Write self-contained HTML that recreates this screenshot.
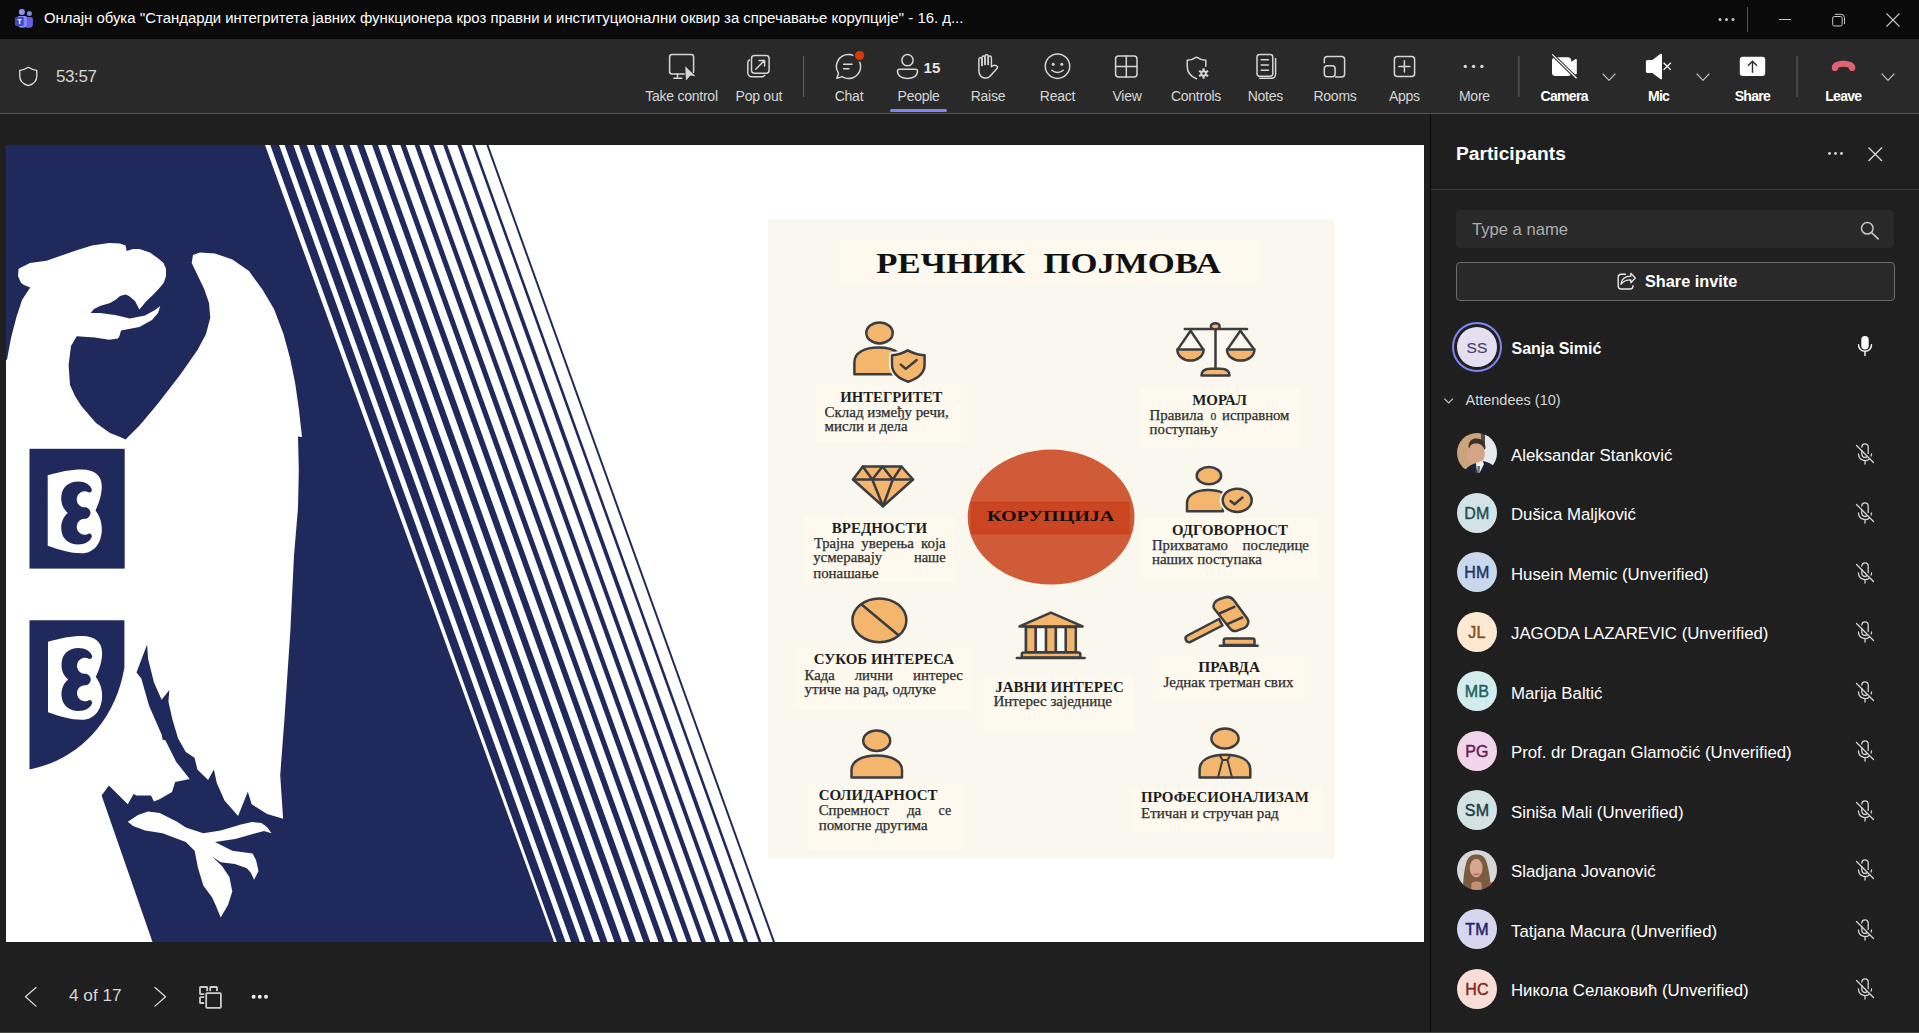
<!DOCTYPE html>
<html><head><meta charset="utf-8">
<style>
*{margin:0;padding:0;box-sizing:border-box}
html,body{width:1919px;height:1033px;overflow:hidden;background:#1f1f1f;font-family:"Liberation Sans",sans-serif;position:relative}
.abs{position:absolute}
#titlebar{left:0;top:0;width:1919px;height:39px;background:#0a0a0a}
#title{left:44px;top:9px;font-size:14.9px;color:#fff;white-space:nowrap;line-height:18px}
#toolbar{left:0;top:39px;width:1919px;height:74px;background:#292929}
#tbline{left:0;top:113px;width:1919px;height:1px;background:#545454}
.lbl{position:absolute;top:88px;font-size:14px;letter-spacing:-0.25px;line-height:16px;color:#d6d6d6;white-space:nowrap;transform:translateX(-50%)}
.lbl.w{color:#fff;font-weight:bold;letter-spacing:-0.7px}
.sep{position:absolute;width:1px;background:#555}
svg.ic{position:absolute;overflow:visible}
#panel{left:1430px;top:114px;width:489px;height:918px;background:#1f1f1f;border-left:1px solid #060606}
.pname{position:absolute;left:1511px;font-size:16.8px;color:#fff;white-space:nowrap;line-height:20px}
.av{position:absolute;left:1457px;width:40px;height:40px;border-radius:50%;font-size:16px;font-weight:normal;-webkit-text-stroke:0.45px currentColor;text-align:center;line-height:41px;letter-spacing:0.2px}
</style></head><body>
<!-- TITLE BAR -->
<div id="titlebar" class="abs"></div>
<svg class="ic" style="left:0;top:0" width="40" height="38" viewBox="0 0 40 38">
  <circle cx="21.9" cy="11.9" r="3" fill="#8f93f2"/>
  <circle cx="29.4" cy="13.4" r="2.5" fill="#7e84f0"/>
  <path d="M26 16.9 h4.9 a2 2 0 0 1 2 2 v5.4 a3.5 3.5 0 0 1 -3.5 3.5 h-3.4z" fill="#6b5de2"/>
  <path d="M17.9 16.1 h7.5 a1.5 1.5 0 0 1 1.5 1.5 v6.5 a3.7 3.7 0 0 1 -3.7 3.7 h-1.6 a3.7 3.7 0 0 1 -3.7 -3.7z" fill="#7e8cf4"/>
  <rect x="15" y="16.9" width="8.8" height="9" rx="1.3" fill="#4349c9"/>
  <path d="M17.8 19.7 h3.6 M19.6 19.7 v4.4" stroke="#fff" stroke-width="1.3"/>
</svg>
<div id="title" class="abs">Онлајн обука ''Стандарди интегритета јавних функционера кроз правни и институционални оквир за спречавање корупције'' - 16. д...</div>
<svg class="ic" style="left:1700px;top:0" width="219" height="38" viewBox="0 0 219 38">
  <g fill="#c8c8c8"><circle cx="20" cy="19.4" r="1.5"/><circle cx="26.5" cy="19.4" r="1.5"/><circle cx="33" cy="19.4" r="1.5"/></g>
  <rect x="47" y="7" width="1" height="25" fill="#555"/>
  <path d="M79 19.5 h12" stroke="#c8c8c8" stroke-width="1"/>
  <rect x="132.7" y="16.5" width="9.5" height="9.5" rx="1.6" fill="none" stroke="#c8c8c8" stroke-width="1"/>
  <path d="M134.8 14.3 h6.2 a3.5 3.5 0 0 1 3.5 3.5 v6.3" fill="none" stroke="#c8c8c8" stroke-width="1"/>
  <path d="M186.5 13.5 L199.5 26.5 M199.5 13.5 L186.5 26.5" stroke="#c8c8c8" stroke-width="1.1"/>
</svg>

<!-- TOOLBAR -->
<div id="toolbar" class="abs"></div>
<div id="tbline" class="abs"></div>
<svg class="ic" style="left:0;top:38px" width="120" height="75" viewBox="0 38 120 75">
  <path d="M28.3 67.3 C31 69.1 34 70.1 36.8 70.3 V76 C36.8 81 33.5 84.2 28.3 85.6 C23.1 84.2 19.8 81 19.8 76 V70.3 C22.6 70.1 25.6 69.1 28.3 67.3 Z" fill="none" stroke="#e0e0e0" stroke-width="1.3" stroke-linejoin="round"/>
</svg>
<div class="abs" style="left:56px;top:67px;font-size:17px;letter-spacing:-0.4px;line-height:20px;color:#d6d6d6">53:57</div>

<svg class="ic" style="left:0;top:0" width="1919" height="113" viewBox="0 0 1919 113">
 <g fill="none" stroke="#d6d6d6" stroke-width="1.5" stroke-linecap="round" stroke-linejoin="round">
  <!-- take control -->
  <rect x="669.6" y="54.6" width="24" height="19.3" rx="2.5"/>
  <path d="M677.5 74 v4 M673.8 78.2 h8"/>
  <!-- pop out -->
  <rect x="751.5" y="55.6" width="17.6" height="17.6" rx="3"/>
  <path d="M749.3 60 c-1 0.6 -1.5 1.6 -1.5 2.8 v10 a4 4 0 0 0 4 4 h10 c1.2 0 2.2 -0.5 2.8 -1.5"/>
  <path d="M755.8 69.2 L764.4 60.6 M759 60.4 h5.6 v5.6"/>
  <!-- chat -->
  <path d="M848.5 54.5 a12 12 0 1 1 -6.4 22.1 l-5.2 1.6 l1.6 -5 a12 12 0 0 1 10 -18.7z"/>
  <path d="M843.7 64.3 h8.4 M843.7 68.8 h5.2"/>
  <!-- people -->
  <circle cx="907.5" cy="60.2" r="5.6"/>
  <path d="M899.5 69.3 h16 a2 2 0 0 1 2 2 c0 4.5 -4.5 7.2 -10 7.2 s-10 -2.7 -10 -7.2 a2 2 0 0 1 2 -2z"/>
  <!-- raise -->
  <path d="M982 65.4 V59.3 A1.55 1.55 0 0 0 978.9 59.3 V71 C978.9 75 981.5 78 985 78 H986.5 C988 78 989 77.3 990 76.2 L997 68.6 C997.8 67.7 997.6 66.4 996.6 65.9 C995 65 993 65.3 991.4 66.8 V57.7 A1.6 1.6 0 0 0 988.2 57.7 V64.4"/>
  <path d="M988.2 64.4 V56.3 A1.6 1.6 0 0 0 985 56.3 V64.4"/>
  <path d="M985 64.4 V57.6 A1.5 1.5 0 0 0 982 57.6 V65.4"/>
  <!-- react -->
  <circle cx="1057.5" cy="66.2" r="12.2"/>
  <path d="M1051.8 70.2 c3.2 3 8.2 3 11.4 0"/>
  <!-- view -->
  <rect x="1115.6" y="55.9" width="21.4" height="21.2" rx="3"/>
  <path d="M1126.3 56 v21 M1115.7 66.6 h21.2"/>
  <!-- controls -->
  <path d="M1196.5 57.2 c2.8 2 6 3 9.3 3 v6 M1196.5 57.2 c-2.8 2 -6 3 -9.3 3 v6 c0 6 3.6 10.3 9.3 12.6"/>
  <!-- notes -->
  <rect x="1257" y="54.6" width="15.8" height="21.6" rx="2.6"/>
  <path d="M1261.2 59.8 h7.2 M1261.2 64.9 h7.2 M1261.2 70.2 h7.2"/>
  <path d="M1275.6 58.5 v15.8 a4 4 0 0 1 -4 4 h-12"/>
  <!-- rooms -->
  <path d="M1324.3 62.8 v-3.3 a3 3 0 0 1 3 -3 h14.3 a3 3 0 0 1 3 3 v14.5 a3 3 0 0 1 -3 3 h-6"/>
  <rect x="1324.3" y="65.8" width="10.8" height="10.9" rx="3"/>
  <!-- apps -->
  <rect x="1394.4" y="56.4" width="20.2" height="20.2" rx="3"/>
  <path d="M1404.4 60.8 v11.2 M1398.8 66.4 h11.2"/>
  <!-- chevrons -->
  <path d="M1603 74 l6 6.3 l6 -6.3 M1697 74 l6 6.3 l6 -6.3 M1882 74 l6 6.3 l6 -6.3" stroke="#bdbdbd" stroke-width="1.1"/>
 </g>
 <!-- take control cursor -->
 <path d="M685.2 66.2 L695.5 76.2 L690.4 75.6 L686 80.5z" fill="#d6d6d6" stroke="#292929" stroke-width="1.6" paint-order="stroke"/>
 <!-- chat red dot -->
 <circle cx="859.6" cy="55.5" r="6.2" fill="#292929"/>
 <circle cx="859.6" cy="55.5" r="4.6" fill="#d83b01"/>
 <!-- controls gear -->
 <g transform="translate(1203.6 73.5)">
   <circle r="3.2" fill="#d6d6d6"/>
   <g fill="#d6d6d6"><rect x="-1.1" y="-5.2" width="2.2" height="10.4"/><rect x="-1.1" y="-5.2" width="2.2" height="10.4" transform="rotate(60)"/><rect x="-1.1" y="-5.2" width="2.2" height="10.4" transform="rotate(120)"/></g>
   <circle r="1.3" fill="#292929"/>
 </g>
 <!-- react eyes -->
 <circle cx="1053.2" cy="64.2" r="1.5" fill="#d6d6d6"/><circle cx="1061.8" cy="64.2" r="1.5" fill="#d6d6d6"/>
 <!-- more dots -->
 <g fill="#d6d6d6"><circle cx="1465.3" cy="66.4" r="1.7"/><circle cx="1473.6" cy="66.4" r="1.7"/><circle cx="1481.9" cy="66.4" r="1.7"/></g>
 <!-- people count -->
 <text x="923.6" y="73.2" font-family="Liberation Sans" font-weight="bold" font-size="15" fill="#e6e6e6">15</text>
 <!-- separators -->
 <rect x="803" y="56" width="1.2" height="41" fill="#5c5c5c"/>
 <rect x="1518.3" y="56" width="1.2" height="41" fill="#5c5c5c"/>
 <rect x="1796.5" y="56" width="1.2" height="41" fill="#5c5c5c"/>
 <!-- people underline -->
 <rect x="890" y="109" width="57" height="3" rx="1.5" fill="#7f85f5"/>
 <!-- camera off -->
 <rect x="1552" y="57.2" width="19.3" height="18.8" rx="3.5" fill="#fff"/>
 <path d="M1571 62 l4.2 -2.8 c0.8 -0.5 1.6 0 1.6 0.9 v13.2 c0 0.9 -0.8 1.4 -1.6 0.9 l-4.2 -2.8z" fill="#fff"/>
 <path d="M1552.2 54.4 L1576.6 78.3" stroke="#292929" stroke-width="3.2"/>
 <path d="M1552.2 54.4 L1576.6 78.3" stroke="#fff" stroke-width="1.2"/>
 <!-- mic off (speaker) -->
 <path d="M1647.5 60 h4.8 l8 -6 c1 -0.7 1.7 -0.3 1.7 0.8 v23.5 c0 1.1 -0.7 1.5 -1.7 0.8 l-8 -6 h-4.8 a1.6 1.6 0 0 1 -1.6 -1.6 v-9.9 a1.6 1.6 0 0 1 1.6 -1.6z" fill="#fff"/>
 <path d="M1663.6 62.8 l7.2 7.1 M1670.8 62.8 l-7.2 7.1" stroke="#fff" stroke-width="1.3"/>
 <!-- share -->
 <rect x="1739.8" y="56.7" width="25.4" height="19.3" rx="3" fill="#fff"/>
 <path d="M1752.5 72.8 v-11.3 M1748 65.8 l4.5 -4.5 l4.5 4.5" fill="none" stroke="#292929" stroke-width="1.4"/>
 <!-- leave -->
 <path d="M1831.8 67.3 c0 -4.5 5.7 -6.6 11.7 -6.6 s11.8 2.1 11.8 6.6 c0 2.1 -0.7 3.8 -2.3 3.8 c-2.2 0 -3.3 -0.2 -3.8 -1.6 l-0.7 -2 c-1.6 -0.6 -3.2 -0.8 -5 -0.8 s-3.4 0.2 -5 0.8 l-0.7 2 c-0.5 1.4 -1.6 1.6 -3.8 1.6 c-1.6 0 -2.2 -1.7 -2.2 -3.8z" fill="#e06170"/>
</svg>
<div class="lbl" style="left:681.5px">Take control</div>
<div class="lbl" style="left:758.8px">Pop out</div>
<div class="lbl" style="left:849px">Chat</div>
<div class="lbl" style="left:918.6px">People</div>
<div class="lbl" style="left:988px">Raise</div>
<div class="lbl" style="left:1057.5px">React</div>
<div class="lbl" style="left:1127px">View</div>
<div class="lbl" style="left:1196px">Controls</div>
<div class="lbl" style="left:1265.3px">Notes</div>
<div class="lbl" style="left:1335px">Rooms</div>
<div class="lbl" style="left:1404.4px">Apps</div>
<div class="lbl" style="left:1474.4px">More</div>
<div class="lbl w" style="left:1564.2px">Camera</div>
<div class="lbl w" style="left:1658.6px">Mic</div>
<div class="lbl w" style="left:1752.4px">Share</div>
<div class="lbl w" style="left:1843.3px">Leave</div>
<svg class="ic" style="left:6px;top:145px" width="1418" height="797" viewBox="6 145 1418 797">
<rect x="6" y="145" width="1418" height="797" fill="#fff"/>
<path d="M6 145 L265 145 L554 942 L6 942z" fill="#20295c"/>
<g fill="#20295c"><path d="M270.3 145.0 L279.1 145.0 L565.6 942.0 L556.8 942.0z"/><path d="M284.6 145.0 L293.4 145.0 L579.9 942.0 L571.1 942.0z"/><path d="M298.8 145.0 L306.9 145.0 L593.4 942.0 L585.3 942.0z"/><path d="M313.7 145.0 L321.1 145.0 L607.6 942.0 L600.2 942.0z"/><path d="M327.9 145.0 L335.4 145.0 L621.9 942.0 L614.4 942.0z"/><path d="M342.8 145.0 L349.6 145.0 L636.1 942.0 L629.3 942.0z"/><path d="M357.0 145.0 L363.8 145.0 L650.3 942.0 L643.5 942.0z"/><path d="M372.0 145.0 L378.0 145.0 L664.5 942.0 L658.5 942.0z"/><path d="M386.2 145.0 L391.6 145.0 L678.1 942.0 L672.7 942.0z"/><path d="M400.4 145.0 L405.8 145.0 L692.3 942.0 L686.9 942.0z"/><path d="M414.6 145.0 L419.4 145.0 L705.9 942.0 L701.1 942.0z"/><path d="M428.9 145.0 L433.6 145.0 L720.1 942.0 L715.4 942.0z"/><path d="M443.1 145.0 L447.2 145.0 L733.7 942.0 L729.6 942.0z"/><path d="M457.3 145.0 L461.4 145.0 L747.9 942.0 L743.8 942.0z"/><path d="M472.2 145.0 L474.9 145.0 L761.4 942.0 L758.7 942.0z"/><path d="M486.4 145.0 L488.5 145.0 L775.0 942.0 L772.9 942.0z"/></g>
<path d="M6.0 360.0 L7.0 359.4 L11.0 338.0 L16.3 317.6 L22.0 300.0 L30.2 287.4 L24.0 285.0 L21.0 282.7 L18.0 276.0 L18.6 268.8 L30.0 263.0 L46.5 260.7 L60.0 256.0 L76.7 250.2 L92.0 245.5 L109.0 243.0 L120.0 243.5 L125.5 245.6 L126.7 251.0 L133.0 249.0 L139.4 249.0 L150.0 252.5 L158.0 258.3 L163.5 263.0 L166.0 268.8 L166.0 276.0 L163.8 282.7 L159.0 288.5 L153.4 294.4 L146.0 301.5 L139.4 309.5 L135.0 301.0 L129.0 296.0 L125.5 294.4 L120.0 296.0 L116.0 299.5 L110.0 303.0 L100.0 306.0 L94.0 309.0 L90.6 313.0 L100.0 313.0 L115.0 315.0 L130.0 318.5 L145.0 315.5 L155.0 310.0 L160.3 306.0 L158.0 313.0 L152.0 320.0 L139.4 327.0 L121.0 330.4 L119.5 336.0 L118.0 338.5 L109.0 339.7 L95.0 337.5 L76.7 336.2 L71.0 346.0 L68.6 365.0 L70.0 385.0 L75.0 396.0 L81.3 406.0 L96.0 423.0 L110.0 433.0 L119.0 436.5 L125.5 439.6 L140.0 425.0 L158.0 403.6 L180.0 375.0 L197.5 350.0 L206.0 334.0 L210.3 317.6 L209.0 303.0 L204.5 289.7 L197.0 274.0 L191.7 263.0 L193.0 255.0 L199.9 252.5 L215.0 253.5 L232.4 259.5 L249.0 271.0 L262.6 289.7 L274.0 309.0 L283.5 333.9 L290.0 358.0 L295.1 382.7 L299.0 410.0 L302.0 437.0 L298.0 436.5 L298.8 470.0 L298.0 508.0 L294.0 555.5 L290.4 630.0 L284.6 717.0 L280.2 775.2 L283.1 818.8 L267.1 813.9 L251.7 804.3 L247.8 791.7 L238.1 815.9 L224.5 800.4 L216.8 783.0 L213.9 769.4 L208.1 780.0 L197.4 769.4 L194.5 757.8 L185.8 752.0 L178.1 738.4 L172.3 719.1 L168.4 701.6 L169.4 690.0 L161.6 699.7 L153.9 682.3 L148.1 659.0 L147.1 644.5 L136.5 672.6 L141.3 678.4 L149.0 705.5 L161.6 734.5 L162.6 739.4 L165.5 740.4 L176.1 761.7 L189.7 779.1 L175.2 782.0 L172.0 792.0 L160.0 799.0 L153.9 801.4 L151.0 795.5 L136.5 795.5 L133.6 794.0 L127.8 804.3 L108.9 785.4 L101.6 795.5 L152.5 942.0 L6.0 942.0z" fill="#fff"/>
<path d="M127.8 821.7 L138.0 815.0 L148.0 811.5 L159.7 813.0 L177.1 821.7 L185.8 827.5 L203.3 833.3 L220.7 830.4 L241.0 824.6 L252.0 822.0 L261.4 823.1 L267.0 827.0 L271.5 833.3 L264.0 831.0 L255.5 833.3 L235.2 839.1 L214.9 842.0 L232.3 850.7 L252.6 853.6 L256.0 860.0 L258.5 871.0 L254.1 879.8 L251.0 873.0 L246.8 868.2 L235.0 864.0 L220.7 862.3 L212.0 856.5 L222.0 866.0 L229.4 876.9 L232.3 891.4 L228.0 905.0 L220.7 917.5 L216.0 906.0 L212.0 897.2 L203.3 885.6 L198.0 868.0 L194.6 850.7 L185.8 842.0 L162.6 833.3 L145.2 830.4 L133.0 826.0z" fill="#fff"/>
<rect x="29.5" y="448.8" width="95.2" height="119.8" fill="#20295c"/>
<g transform="translate(0 0)"><path d="M47.7 475.2 C60 472 70 469.6 81.7 469.6 C95 469.6 101.5 476 101.8 486 C102 494 99 503 95.5 510.5 C99.5 516 102 522 101.8 530 C101.5 542 95 553.3 81.7 553.3 C70 553.3 60 550 47.7 545.8 Z" fill="#fff"/><path d="M67.8 513 C62 508 60.5 501 61.5 495 C62.5 487 69 481.5 78 481.5 C85 481.5 90.5 484.5 92 490 C91 493 89 493 87.5 491.8 A8 8 0 1 0 86 507.2 C88.5 508 90.5 510.5 90.5 513 C90.5 515.5 88.5 518 86 518.8 A8 8 0 1 0 87.5 534.2 C89 533 91 533 92 536 C90.5 541.5 85 544.5 78 544.5 C69 544.5 62.5 539 61.5 531 C60.5 525 62 518 67.8 513 Z" fill="#20295c"/></g>
<path d="M29.5 620.3 H124.4 V667.8 C115 722 78 760 29.5 769.5 Z" fill="#20295c"/>
<g transform="translate(0.3 166.5)"><path d="M47.7 475.2 C60 472 70 469.6 81.7 469.6 C95 469.6 101.5 476 101.8 486 C102 494 99 503 95.5 510.5 C99.5 516 102 522 101.8 530 C101.5 542 95 553.3 81.7 553.3 C70 553.3 60 550 47.7 545.8 Z" fill="#fff"/><path d="M67.8 513 C62 508 60.5 501 61.5 495 C62.5 487 69 481.5 78 481.5 C85 481.5 90.5 484.5 92 490 C91 493 89 493 87.5 491.8 A8 8 0 1 0 86 507.2 C88.5 508 90.5 510.5 90.5 513 C90.5 515.5 88.5 518 86 518.8 A8 8 0 1 0 87.5 534.2 C89 533 91 533 92 536 C90.5 541.5 85 544.5 78 544.5 C69 544.5 62.5 539 61.5 531 C60.5 525 62 518 67.8 513 Z" fill="#20295c"/></g>
<rect x="768" y="219" width="567" height="639.5" fill="#faf7ef"/>
<g fill="#fdf9ee">
 <rect x="840" y="240" width="418" height="43"/>
 <rect x="816" y="384" width="151" height="58"/>
 <rect x="1139.5" y="388" width="160.5" height="59"/>
 <rect x="804" y="516" width="151" height="66"/>
 <rect x="1142" y="518" width="176" height="61"/>
 <rect x="795" y="649" width="177" height="61"/>
 <rect x="983" y="675" width="151" height="56"/>
 <rect x="1153" y="655.5" width="152" height="45"/>
 <rect x="808.6" y="784" width="153.4" height="66"/>
 <rect x="1131" y="786.6" width="191" height="46"/>
</g>
<!-- corruption circle -->
<ellipse cx="1051.1" cy="517.1" rx="83.4" ry="67.5" fill="#d05b38"/>
<clipPath id="ecl"><ellipse cx="1051.1" cy="517.1" rx="83.4" ry="67.5"/></clipPath>
<rect x="970.6" y="501.7" width="159.1" height="32.8" fill="#cb4522" clip-path="url(#ecl)"/>

<g stroke="#3b3d40" stroke-width="2.5" stroke-linejoin="round" stroke-linecap="round" fill="#f4b66d">
 <!-- 1 integrity -->
 <path d="M854.4 374.2 V362 C854.4 352.5 864.5 347.6 878.5 347.6 C887 347.6 894 349.5 898.5 353 V374.2z"/>
 <ellipse cx="879.5" cy="332.9" rx="13.2" ry="10.5"/>
 <path d="M907.8 350.3 C912.5 353 919 354.8 924.6 355.2 V364.5 C924.6 372.5 918 378.5 908.2 381.7 C898.5 378.5 892 372.5 892 364.5 V355.2 C897 354.8 903 353 907.8 350.3z" stroke="#faf7ef" stroke-width="6"/><path d="M907.8 350.3 C912.5 353 919 354.8 924.6 355.2 V364.5 C924.6 372.5 918 378.5 908.2 381.7 C898.5 378.5 892 372.5 892 364.5 V355.2 C897 354.8 903 353 907.8 350.3z"/>
 <path d="M900.8 364.6 L905.8 368.9 L916.7 360" fill="none"/>
 <!-- 2 scales -->
 <path d="M1184.8 329 H1247 M1215.5 329 V370" fill="none"/>
 <ellipse cx="1215.3" cy="326.2" rx="4.4" ry="3"/>
 <path d="M1190.6 330.8 L1177.8 349.4 M1190.6 330.8 L1203.2 349.4 M1240.4 330.8 L1227.4 349.4 M1240.4 330.8 L1254.2 349.4" fill="none"/>
 <path d="M1177.3 349.4 H1203.6 C1203.6 356 1197.5 360.5 1190.4 360.5 C1183.3 360.5 1177.3 356 1177.3 349.4z"/>
 <path d="M1227 349.4 H1254.4 C1254.4 356 1248.3 360.5 1240.7 360.5 C1233.1 360.5 1227 356 1227 349.4z"/>
 <path d="M1201.5 375.6 C1201.5 370.5 1206 368.8 1210.5 368.8 H1220.5 C1225 368.8 1229.5 370.5 1229.5 375.6z"/>
 <!-- 3 diamond -->
 <path d="M862.8 466.5 H901.5 L913 479.5 L883 506.3 L853 479.5z"/>
 <path d="M853 479.5 H913 M862.8 466.5 L872.3 479.5 L882.5 466.5 L892.8 479.5 L901.5 466.5 M872.3 479.5 L883 506.3 L892.8 479.5" fill="none"/>
 <!-- 4 responsibility -->
 <path d="M1187 511.3 V503 C1187 495 1196 490 1208 490 C1214 490 1219 491 1223 493 V511.3z"/>
 <ellipse cx="1208.9" cy="475.7" rx="12.2" ry="8.6"/>
 <ellipse cx="1237.2" cy="500.3" rx="14.5" ry="11.6" stroke="#faf7ef" stroke-width="6"/><ellipse cx="1237.2" cy="500.3" rx="14.5" ry="11.6"/>
 <path d="M1230.5 501 L1234.5 504.3 L1242.5 497.5" fill="none"/>
 <!-- 5 prohibition -->
 <ellipse cx="879.4" cy="620.3" rx="27" ry="21.9"/>
 <path d="M861.3 604.3 L898.2 635" fill="none"/>
 <!-- 6 building -->
 <path d="M1050.9 612.6 L1019.5 626.4 H1082.6z"/>
 <path d="M1026 627 V652.2 H1075.8 V627" fill="none"/>
 <rect x="1026" y="627" width="9.8" height="25.2"/>
 <rect x="1045.9" y="627" width="10" height="25.2"/>
 <rect x="1065.7" y="627" width="10.1" height="25.2"/>
 <rect x="1035.8" y="627" width="10.1" height="25.2" fill="#fdfbf6"/>
 <rect x="1055.9" y="627" width="9.8" height="25.2" fill="#fdfbf6"/>
 <path d="M1021.8 657.6 V654.5 a2 2 0 0 1 2 -2 H1078.3 a2 2 0 0 1 2 2 V657.6z"/>
 <path d="M1016.8 657.9 H1084.6" fill="none"/>
 <!-- 7 gavel -->
 <path d="M1187.5 635.5 L1219 619 L1222.5 625.5 L1190.5 641.8 C1186.5 643.8 1183.5 637.5 1187.5 635.5z"/>
 <path d="M1214 608.5 C1212.5 605 1214.5 601 1219 599.3 L1225.5 597.2 C1229.5 596 1232 598 1234 600.5 L1247.3 618.5 C1249.5 621.7 1248 626 1244.5 627.8 L1237.3 630.6 C1234.5 631.6 1231.5 630.5 1229.8 628.2z"/>
 <path d="M1219.5 613.5 L1234.3 606.8 M1227.3 624.2 L1242.2 617.5" fill="none"/>
 <path d="M1223.8 645 V640.5 a2 2 0 0 1 2 -2 H1252.5 a2 2 0 0 1 2 2 V645z"/>
 <path d="M1219.8 645.8 H1257.6" fill="none"/>
 <!-- 8 solidarity -->
 <path d="M851.5 777.6 V770 C851.5 761 862 755.5 876.7 755.5 C891.4 755.5 902 761 902 770 V777.6z"/>
 <ellipse cx="876.7" cy="740.8" rx="13.5" ry="10.2"/>
 <!-- 9 professionalism -->
 <path d="M1199.6 777.6 V769 C1199.6 760 1210 754.8 1225 754.8 C1240 754.8 1250.3 760 1250.3 769 V777.6z"/>
 <ellipse cx="1225" cy="738.5" rx="13.6" ry="10"/>
 <path d="M1219.5 755 L1222.5 760 L1218 777.6 M1230.5 755 L1227.5 760 L1232 777.6 M1222.5 760 H1227.5" fill="none" stroke-width="2"/>
</g>

<g font-family="Liberation Serif" fill="#111">
 <text x="876.2" y="272.7" font-size="29.8" font-weight="bold" textLength="149" lengthAdjust="spacingAndGlyphs">РЕЧНИК</text>
 <text x="1043.5" y="272.7" font-size="29.8" font-weight="bold" textLength="177.3" lengthAdjust="spacingAndGlyphs">ПОЈМОВА</text>
 <text x="987" y="520.6" font-size="15.4" font-weight="bold" textLength="127.3" lengthAdjust="spacingAndGlyphs">КОРУПЦИЈА</text>
</g>
<g font-family="Liberation Serif" font-weight="bold" font-size="14.2" fill="#1e1e1e">
 <text x="840.2" y="401.7" textLength="102.2" lengthAdjust="spacingAndGlyphs">ИНТЕГРИТЕТ</text>
 <text x="1192.2" y="404.7" textLength="54.8" lengthAdjust="spacingAndGlyphs">МОРАЛ</text>
 <text x="831.8" y="532.6" textLength="95.3" lengthAdjust="spacingAndGlyphs">ВРЕДНОСТИ</text>
 <text x="1172" y="534.5" textLength="115.8" lengthAdjust="spacingAndGlyphs">ОДГОВОРНОСТ</text>
 <text x="813.7" y="664.4" textLength="140.4" lengthAdjust="spacingAndGlyphs">СУКОБ ИНТЕРЕСА</text>
 <text x="995.2" y="691.6" textLength="128.6" lengthAdjust="spacingAndGlyphs">ЈАВНИ ИНТЕРЕС</text>
 <text x="1198.3" y="671.5" textLength="61.7" lengthAdjust="spacingAndGlyphs">ПРАВДА</text>
 <text x="818.7" y="800.1" textLength="118.9" lengthAdjust="spacingAndGlyphs">СОЛИДАРНОСТ</text>
 <text x="1141.1" y="802.4" textLength="167.7" lengthAdjust="spacingAndGlyphs">ПРОФЕСИОНАЛИЗАМ</text>
</g>
<g font-family="Liberation Serif" font-size="14" fill="#2e2e2e" stroke="#2e2e2e" stroke-width="0.25">
 <text x="824.6" y="416.8" textLength="124.1" lengthAdjust="spacingAndGlyphs">Склад између речи,</text>
 <text x="824.6" y="430.8" textLength="83" lengthAdjust="spacingAndGlyphs">мисли и дела</text>
 <text x="1149.5" y="420.3" textLength="53.9" lengthAdjust="spacingAndGlyphs">Правила</text>
 <text x="1210.4" y="420.3" textLength="5.8" lengthAdjust="spacingAndGlyphs">о</text>
 <text x="1222" y="420.3" textLength="67.4" lengthAdjust="spacingAndGlyphs">исправном</text>
 <text x="1149.5" y="434.3" textLength="68.3" lengthAdjust="spacingAndGlyphs">поступању</text>
 <text x="814" y="547.7" textLength="40.3" lengthAdjust="spacingAndGlyphs">Трајна</text>
 <text x="861.3" y="547.7" textLength="52.6" lengthAdjust="spacingAndGlyphs">уверења</text>
 <text x="920.9" y="547.7" textLength="24.8" lengthAdjust="spacingAndGlyphs">која</text>
 <text x="813.2" y="562.4" textLength="69" lengthAdjust="spacingAndGlyphs">усмеравају</text>
 <text x="913.9" y="562.4" textLength="31.8" lengthAdjust="spacingAndGlyphs">наше</text>
 <text x="813.2" y="577.6" textLength="65.4" lengthAdjust="spacingAndGlyphs">понашање</text>
 <text x="1151.9" y="549.9" textLength="76.1" lengthAdjust="spacingAndGlyphs">Прихватамо</text>
 <text x="1242.5" y="549.9" textLength="66.5" lengthAdjust="spacingAndGlyphs">последице</text>
 <text x="1151.9" y="564.4" textLength="110" lengthAdjust="spacingAndGlyphs">наших поступака</text>
 <text x="804.6" y="679.7" textLength="30.1" lengthAdjust="spacingAndGlyphs">Када</text>
 <text x="854.7" y="679.7" textLength="38.3" lengthAdjust="spacingAndGlyphs">лични</text>
 <text x="913.1" y="679.7" textLength="49.8" lengthAdjust="spacingAndGlyphs">интерес</text>
 <text x="804.6" y="694.3" textLength="131.3" lengthAdjust="spacingAndGlyphs">утиче на рад, одлуке</text>
 <text x="993.4" y="706.2" textLength="118.6" lengthAdjust="spacingAndGlyphs">Интерес заједнице</text>
 <text x="1163.4" y="686.7" textLength="130" lengthAdjust="spacingAndGlyphs">Једнак третман свих</text>
 <text x="818.7" y="815.3" textLength="70.2" lengthAdjust="spacingAndGlyphs">Спремност</text>
 <text x="906.9" y="815.3" textLength="14.4" lengthAdjust="spacingAndGlyphs">да</text>
 <text x="938.5" y="815.3" textLength="12.6" lengthAdjust="spacingAndGlyphs">се</text>
 <text x="818.7" y="829.6" textLength="108.9" lengthAdjust="spacingAndGlyphs">помогне другима</text>
 <text x="1141.1" y="817.6" textLength="137.6" lengthAdjust="spacingAndGlyphs">Етичан и стручан рад</text>
</g>

</svg><!-- BOTTOM BAR -->
<svg class="ic" style="left:0;top:960px" width="300" height="73" viewBox="0 960 300 73">
  <g fill="none" stroke="#e0e0e0" stroke-width="1.2" stroke-linecap="round" stroke-linejoin="round">
    <path d="M36 987.5 l-10.5 9.3 l10.5 9.3"/>
    <path d="M155 987.5 l10.5 9.3 l-10.5 9.3"/>
  </g>
  <g fill="none" stroke="#cdcdcd" stroke-width="1.8">
    <rect x="200" y="987" width="7.2" height="7.2" rx="0.6"/>
    <rect x="210.2" y="987" width="6.8" height="7.2" rx="0.6"/>
    <rect x="200" y="997.1" width="7.2" height="5.9" rx="0.6"/>
    <rect x="206.2" y="993.1" width="14.7" height="14.7" fill="#1f1f1f" stroke="#1f1f1f" stroke-width="4"/>
    <rect x="206.2" y="993.1" width="14.7" height="14.7" rx="0.8"/>
  </g>
  <g fill="#ececec"><circle cx="253.6" cy="996.8" r="2"/><circle cx="259.8" cy="996.8" r="2"/><circle cx="266" cy="996.8" r="2"/></g>
</svg>
<div class="abs" style="left:69px;top:985px;font-size:17.2px;color:#d6d6d6;line-height:21px">4 of 17</div>
<div class="abs" style="left:0;top:1032px;width:1919px;height:1px;background:#48473e"></div>
<!-- PANEL -->
<div id="panel" class="abs"></div>
<div class="abs" style="left:1431px;top:189px;width:488px;height:1px;background:#3b3b3b"></div>
<div class="abs" style="left:1456px;top:142px;font-size:19.2px;font-weight:bold;color:#fff;line-height:24px">Participants</div>
<svg class="ic" style="left:1420px;top:130px" width="499" height="40" viewBox="1420 130 499 40">
  <g fill="#d6d6d6"><circle cx="1829.5" cy="153.5" r="1.4"/><circle cx="1835.5" cy="153.5" r="1.4"/><circle cx="1841.5" cy="153.5" r="1.4"/></g>
  <path d="M1868.5 147.5 l13.5 13.5 M1882 147.5 l-13.5 13.5" stroke="#d6d6d6" stroke-width="1.4"/>
</svg>
<!-- search -->
<div class="abs" style="left:1456px;top:210px;width:438px;height:38px;background:#292929;border-radius:4px"></div>
<div class="abs" style="left:1472px;top:220px;font-size:16.6px;color:#adadad;line-height:20px">Type a name</div>
<svg class="ic" style="left:1855px;top:215px" width="30" height="30" viewBox="1855 215 30 30">
  <circle cx="1867.3" cy="228.3" r="5.8" fill="none" stroke="#c8c8c8" stroke-width="1.5"/>
  <path d="M1871.5 232.5 l6.6 6.4" stroke="#c8c8c8" stroke-width="1.7" stroke-linecap="round"/>
</svg>
<!-- share invite -->
<div class="abs" style="left:1456px;top:262px;width:439px;height:38.5px;background:#292929;border:1px solid #6b6b6b;border-radius:4px"></div>
<svg class="ic" style="left:1610px;top:265px" width="40" height="30" viewBox="1610 265 40 30">
  <path d="M1625.5 274.2 H1621.2 a3 3 0 0 0 -3 3 V286 a3 3 0 0 0 3 3 H1630 a3 3 0 0 0 3 -3 V285.8" fill="none" stroke="#e8e8e8" stroke-width="1.4" stroke-linecap="round"/>
  <path d="M1620.8 284.3 C1621.5 279.5 1625 276.2 1630.8 276.2 V273.3 L1635.3 278 L1630.8 282.8 V279.8 C1626.5 279.8 1623 281.2 1620.8 284.3 Z" fill="none" stroke="#e8e8e8" stroke-width="1.3" stroke-linejoin="round"/>
</svg>
<div class="abs" style="left:1645px;top:271px;font-size:16.3px;font-weight:bold;color:#fff;line-height:20px">Share invite</div>
<!-- organizer -->
<div class="abs" style="left:1452px;top:322px;width:50px;height:50px;border-radius:50%;border:2px solid #7f85f5"></div>
<div class="av" style="top:327px;background:#e5e0f0;color:#46416f;font-size:15.5px;-webkit-text-stroke:0.2px currentColor">SS</div>
<div class="abs" style="left:1511.5px;top:338.5px;font-size:16px;font-weight:bold;color:#fff;line-height:20px">Sanja Simić</div>
<svg class="ic" style="left:1850px;top:330px" width="30" height="30" viewBox="1850 330 30 30">
  <rect x="1861.3" y="336" width="7.4" height="13.5" rx="3.7" fill="#fff"/>
  <path d="M1858.5 344.8 a6.5 6.5 0 0 0 13 0 M1865 351.3 v4.3" fill="none" stroke="#fff" stroke-width="1.4" stroke-linecap="round"/>
</svg>
<!-- attendees header -->
<svg class="ic" style="left:1440px;top:390px" width="20" height="20" viewBox="1440 390 20 20">
  <path d="M1444.3 398.6 l4.3 4.3 l4.3 -4.3" fill="none" stroke="#c8c8c8" stroke-width="1.2"/>
</svg>
<div class="abs" style="left:1465.5px;top:391px;font-size:14.5px;color:#d6d6d6;line-height:18px">Attendees (10)</div>
<svg class="ic" style="left:1457px;top:433px" width="40" height="40" viewBox="0 0 40 40"><defs><clipPath id="cp1"><circle cx="20" cy="20" r="20"/></clipPath><filter id="bl1"><feGaussianBlur stdDeviation="0.6"/></filter></defs><g clip-path="url(#cp1)"><g filter="url(#bl1)"><rect width="40" height="40" fill="#c9a37a"/><rect x="24.5" y="-2" width="18" height="44" fill="#e6eaee"/><rect x="24" y="-2" width="4" height="14" fill="#4d4b49"/><ellipse cx="18.8" cy="20.5" rx="9" ry="11.5" fill="#d6a489"/><path d="M11.5 14 C11.5 8 15 5.5 19.5 5.5 C24.5 5.5 28.5 8.5 28.5 15 L27.5 17 C26 12 23 10.5 19 10.5 C15 10.5 13 12 12.5 15.5z" fill="#3b312a"/><path d="M5 42 C8 35 14 31 20 30 L26 28 C31 29 35 31 38 34 L40 42z" fill="#1e2331"/><path d="M19 30 L25.5 27.5 L27 31 L22.5 40 L20 40z" fill="#f2f2f2"/><path d="M20.5 33 L23 33 L22.5 40 L20 40z" fill="#6a6a6a"/></g></g></svg>
<div class="pname" style="top:445.5px">Aleksandar Stanković</div>
<svg class="ic" style="left:1850px;top:440.5px" width="30" height="30" viewBox="0 0 30 30"><g fill="none" stroke="#d6d6d6" stroke-width="1.3" stroke-linecap="round"><path d="M11.8 6 a3.2 3.2 0 0 1 6.4 0 v6.5"/><path d="M11.8 9.5 v3.8 a3.2 3.2 0 0 0 5 2.6"/><path d="M8.5 13 a6.5 6.5 0 0 0 10.8 4.9 M21.5 13 a6.5 6.5 0 0 1 -0.4 2 M15 19.8 v3.2"/><path d="M6.5 4.5 l17 17"/></g></svg>
<div class="av" style="top:492.5px;background:#d4e4e6;color:#264f54">DM</div>
<div class="pname" style="top:505.0px">Dušica Maljković</div>
<svg class="ic" style="left:1850px;top:500.0px" width="30" height="30" viewBox="0 0 30 30"><g fill="none" stroke="#d6d6d6" stroke-width="1.3" stroke-linecap="round"><path d="M11.8 6 a3.2 3.2 0 0 1 6.4 0 v6.5"/><path d="M11.8 9.5 v3.8 a3.2 3.2 0 0 0 5 2.6"/><path d="M8.5 13 a6.5 6.5 0 0 0 10.8 4.9 M21.5 13 a6.5 6.5 0 0 1 -0.4 2 M15 19.8 v3.2"/><path d="M6.5 4.5 l17 17"/></g></svg>
<div class="av" style="top:552.0px;background:#cad8ee;color:#1b3766">HM</div>
<div class="pname" style="top:564.5px">Husein Memic (Unverified)</div>
<svg class="ic" style="left:1850px;top:559.5px" width="30" height="30" viewBox="0 0 30 30"><g fill="none" stroke="#d6d6d6" stroke-width="1.3" stroke-linecap="round"><path d="M11.8 6 a3.2 3.2 0 0 1 6.4 0 v6.5"/><path d="M11.8 9.5 v3.8 a3.2 3.2 0 0 0 5 2.6"/><path d="M8.5 13 a6.5 6.5 0 0 0 10.8 4.9 M21.5 13 a6.5 6.5 0 0 1 -0.4 2 M15 19.8 v3.2"/><path d="M6.5 4.5 l17 17"/></g></svg>
<div class="av" style="top:611.5px;background:#fde8d2;color:#80501a">JL</div>
<div class="pname" style="top:624.0px">JAGODA LAZAREVIC (Unverified)</div>
<svg class="ic" style="left:1850px;top:619.0px" width="30" height="30" viewBox="0 0 30 30"><g fill="none" stroke="#d6d6d6" stroke-width="1.3" stroke-linecap="round"><path d="M11.8 6 a3.2 3.2 0 0 1 6.4 0 v6.5"/><path d="M11.8 9.5 v3.8 a3.2 3.2 0 0 0 5 2.6"/><path d="M8.5 13 a6.5 6.5 0 0 0 10.8 4.9 M21.5 13 a6.5 6.5 0 0 1 -0.4 2 M15 19.8 v3.2"/><path d="M6.5 4.5 l17 17"/></g></svg>
<div class="av" style="top:671.0px;background:#d3eded;color:#245f5f">MB</div>
<div class="pname" style="top:683.5px">Marija Baltić</div>
<svg class="ic" style="left:1850px;top:678.5px" width="30" height="30" viewBox="0 0 30 30"><g fill="none" stroke="#d6d6d6" stroke-width="1.3" stroke-linecap="round"><path d="M11.8 6 a3.2 3.2 0 0 1 6.4 0 v6.5"/><path d="M11.8 9.5 v3.8 a3.2 3.2 0 0 0 5 2.6"/><path d="M8.5 13 a6.5 6.5 0 0 0 10.8 4.9 M21.5 13 a6.5 6.5 0 0 1 -0.4 2 M15 19.8 v3.2"/><path d="M6.5 4.5 l17 17"/></g></svg>
<div class="av" style="top:730.5px;background:#f1d5ea;color:#5f2250">PG</div>
<div class="pname" style="top:743.0px">Prof. dr Dragan Glamočić (Unverified)</div>
<svg class="ic" style="left:1850px;top:738.0px" width="30" height="30" viewBox="0 0 30 30"><g fill="none" stroke="#d6d6d6" stroke-width="1.3" stroke-linecap="round"><path d="M11.8 6 a3.2 3.2 0 0 1 6.4 0 v6.5"/><path d="M11.8 9.5 v3.8 a3.2 3.2 0 0 0 5 2.6"/><path d="M8.5 13 a6.5 6.5 0 0 0 10.8 4.9 M21.5 13 a6.5 6.5 0 0 1 -0.4 2 M15 19.8 v3.2"/><path d="M6.5 4.5 l17 17"/></g></svg>
<div class="av" style="top:790.0px;background:#d3e2e3;color:#1e4045">SM</div>
<div class="pname" style="top:802.5px">Siniša Mali (Unverified)</div>
<svg class="ic" style="left:1850px;top:797.5px" width="30" height="30" viewBox="0 0 30 30"><g fill="none" stroke="#d6d6d6" stroke-width="1.3" stroke-linecap="round"><path d="M11.8 6 a3.2 3.2 0 0 1 6.4 0 v6.5"/><path d="M11.8 9.5 v3.8 a3.2 3.2 0 0 0 5 2.6"/><path d="M8.5 13 a6.5 6.5 0 0 0 10.8 4.9 M21.5 13 a6.5 6.5 0 0 1 -0.4 2 M15 19.8 v3.2"/><path d="M6.5 4.5 l17 17"/></g></svg>
<svg class="ic" style="left:1457px;top:849.5px" width="40" height="40" viewBox="0 0 40 40"><defs><clipPath id="cp2"><circle cx="20" cy="20" r="20"/></clipPath><filter id="bl2"><feGaussianBlur stdDeviation="0.7"/></filter></defs><g clip-path="url(#cp2)"><g filter="url(#bl2)"><rect width="40" height="40" fill="#d5d7d9"/><path d="M6 41 C6 30 7 20 9.5 12 C11.5 6 15 4.5 19.5 4.5 C24 4.5 27.5 6 29.5 12 C32 20 33.5 30 34 41z" fill="#7a5b40"/><path d="M14 41 L14.5 33 C16 31 23 31 24.5 33 L25 41z" fill="#c48f78"/><ellipse cx="19.2" cy="18" rx="6.4" ry="9.3" fill="#d8a68c"/><path d="M16.5 23.8 Q19.2 25.2 22 23.8" stroke="#a0505a" stroke-width="1.2" fill="none"/><path d="M33 33 L40 30 L40 41 L32 41z" fill="#c8542e"/></g></g></svg>
<div class="pname" style="top:862.0px">Sladjana Jovanović</div>
<svg class="ic" style="left:1850px;top:857.0px" width="30" height="30" viewBox="0 0 30 30"><g fill="none" stroke="#d6d6d6" stroke-width="1.3" stroke-linecap="round"><path d="M11.8 6 a3.2 3.2 0 0 1 6.4 0 v6.5"/><path d="M11.8 9.5 v3.8 a3.2 3.2 0 0 0 5 2.6"/><path d="M8.5 13 a6.5 6.5 0 0 0 10.8 4.9 M21.5 13 a6.5 6.5 0 0 1 -0.4 2 M15 19.8 v3.2"/><path d="M6.5 4.5 l17 17"/></g></svg>
<div class="av" style="top:909.0px;background:#d8d5ef;color:#252268">TM</div>
<div class="pname" style="top:921.5px">Tatjana Macura (Unverified)</div>
<svg class="ic" style="left:1850px;top:916.5px" width="30" height="30" viewBox="0 0 30 30"><g fill="none" stroke="#d6d6d6" stroke-width="1.3" stroke-linecap="round"><path d="M11.8 6 a3.2 3.2 0 0 1 6.4 0 v6.5"/><path d="M11.8 9.5 v3.8 a3.2 3.2 0 0 0 5 2.6"/><path d="M8.5 13 a6.5 6.5 0 0 0 10.8 4.9 M21.5 13 a6.5 6.5 0 0 1 -0.4 2 M15 19.8 v3.2"/><path d="M6.5 4.5 l17 17"/></g></svg>
<div class="av" style="top:968.5px;background:#f9ddd7;color:#7e2a1c">HC</div>
<div class="pname" style="top:981.0px">Никола Селаковић (Unverified)</div>
<svg class="ic" style="left:1850px;top:976.0px" width="30" height="30" viewBox="0 0 30 30"><g fill="none" stroke="#d6d6d6" stroke-width="1.3" stroke-linecap="round"><path d="M11.8 6 a3.2 3.2 0 0 1 6.4 0 v6.5"/><path d="M11.8 9.5 v3.8 a3.2 3.2 0 0 0 5 2.6"/><path d="M8.5 13 a6.5 6.5 0 0 0 10.8 4.9 M21.5 13 a6.5 6.5 0 0 1 -0.4 2 M15 19.8 v3.2"/><path d="M6.5 4.5 l17 17"/></g></svg>
</body></html>
